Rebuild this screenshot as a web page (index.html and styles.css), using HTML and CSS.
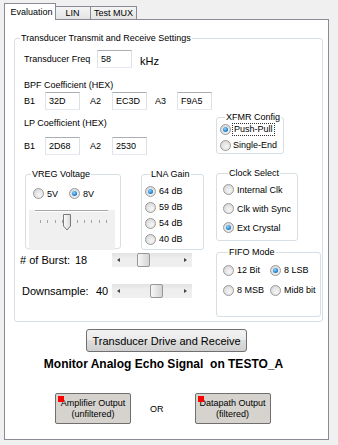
FILE: index.html
```html
<!DOCTYPE html>
<html lang="en">
<head>
    <meta charset="UTF-8">
    <title>Evaluation</title>
    <link rel="stylesheet" href="styles.css">
</head>
<body>
    <div class="window">
        <div class="tabs">
            <div class="tab tab-active">Evaluation</div>
            <div class="tab tab-lin">LIN</div>
            <div class="tab tab-mux">Test MUX</div>
        </div>

        <div class="panel">
            <fieldset class="group main-group">
                <legend>Transducer Transmit and Receive Settings</legend>
                <div class="main-cols">
                    <div class="left-col">
                        <div class="freq-row">
                            <span class="freq-label">Transducer Freq</span>
                            <span class="textbox">58</span>
                            <span class="unit">kHz</span>
                        </div>

                        <div class="coef-title bpf-title">BPF Coefficient (HEX)</div>
                        <div class="coef-row">
                            <span class="coef-label">B1</span>
                            <span class="textbox">32D</span>
                            <span class="coef-label coef-next">A2</span>
                            <span class="textbox">EC3D</span>
                            <span class="coef-label coef-last">A3</span>
                            <span class="textbox">F9A5</span>
                        </div>

                        <div class="coef-title lp-title">LP Coefficient (HEX)</div>
                        <div class="coef-row lp-row">
                            <span class="coef-label">B1</span>
                            <span class="textbox">2D68</span>
                            <span class="coef-label coef-next">A2</span>
                            <span class="textbox">2530</span>
                        </div>

                        <div class="groups-row">
                            <fieldset class="group vreg-group">
                                <legend>VREG Voltage</legend>
                                <div class="vreg-radios">
                                    <label class="radio"><span class="dot"></span>5V</label>
                                    <label class="radio vreg-8v"><span class="dot checked"></span>8V</label>
                                </div>
                                <div class="trackbar">
                                    <div class="groove"></div>
                                    <svg class="thumb" width="10" height="17" viewBox="0 0 10 17">
                                        <defs>
                                            <linearGradient id="thumbFill" x1="0" y1="0" x2="1" y2="0">
                                                <stop offset="0" stop-color="#fdfdfd"/>
                                                <stop offset="1" stop-color="#d9d9d9"/>
                                            </linearGradient>
                                        </defs>
                                        <path d="M1.5 0.5 H8.5 V12 L5 16 L1.5 12 Z" fill="url(#thumbFill)" stroke="#7a7a7a"/>
                                    </svg>
                                    <div class="ticks">
                                        <span></span><span></span><span></span><span></span><span></span>
                                        <span></span><span></span><span></span><span></span><span></span>
                                    </div>
                                </div>
                            </fieldset>

                            <fieldset class="group lna-group">
                                <legend>LNA Gain</legend>
                                <label class="radio"><span class="dot checked"></span>64 dB</label>
                                <label class="radio"><span class="dot"></span>59 dB</label>
                                <label class="radio"><span class="dot"></span>54 dB</label>
                                <label class="radio"><span class="dot"></span>40 dB</label>
                            </fieldset>
                        </div>

                        <div class="slider-row burst-row">
                            <span class="burst-label">#&nbsp;of&nbsp;Burst:</span>
                            <span class="burst-value">18</span>
                            <div class="hscroll">
                                <span class="arrow arrow-left"></span>
                                <span class="hthumb burst-thumb"></span>
                                <span class="arrow arrow-right"></span>
                            </div>
                        </div>

                        <div class="slider-row down-row">
                            <span class="down-label">Downsample:</span>
                            <span class="down-value">40</span>
                            <div class="hscroll">
                                <span class="arrow arrow-left"></span>
                                <span class="hthumb down-thumb"></span>
                                <span class="arrow arrow-right"></span>
                            </div>
                        </div>
                    </div>

                    <div class="right-col">
                        <fieldset class="group xfmr-group">
                            <legend>XFMR Config</legend>
                            <label class="radio"><span class="dot checked"></span><span class="focus">Push-Pull</span></label>
                            <label class="radio"><span class="dot"></span>Single-End</label>
                        </fieldset>

                        <fieldset class="group clock-group">
                            <legend>Clock Select</legend>
                            <label class="radio"><span class="dot"></span>Internal Clk</label>
                            <label class="radio"><span class="dot"></span>Clk with Sync</label>
                            <label class="radio"><span class="dot checked"></span>Ext Crystal</label>
                        </fieldset>

                        <fieldset class="group fifo-group">
                            <legend>FIFO Mode</legend>
                            <div class="fifo-grid">
                                <label class="radio"><span class="dot"></span>12 Bit</label>
                                <label class="radio"><span class="dot checked"></span>8 LSB</label>
                                <label class="radio"><span class="dot"></span>8 MSB</label>
                                <label class="radio"><span class="dot"></span>Mid8 bit</label>
                            </div>
                        </fieldset>
                    </div>
                </div>
            </fieldset>

            <button class="drive-button">Transducer Drive and Receive</button>
            <div class="monitor-title">Monitor Analog Echo Signal&nbsp; on TESTO_A</div>

            <div class="output-row">
                <button class="output-button"><span class="led"></span>Amplifier Output<br>(unfiltered)</button>
                <span class="or-label">OR</span>
                <button class="output-button"><span class="led"></span>Datapath Output<br>(filtered)</button>
            </div>
        </div>
    </div>
</body>
</html>
```

FILE: styles.css
```css
:root {
    --panel-border: #898c95;
    --group-border: #d5dfe5;
}

body {
    margin: 0;
    background: #f0f0f0;
    font-family: "Liberation Sans", Arial, sans-serif;
    font-size: 9px;
    color: #000;
}

.window {
    padding: 3px 0 0 4px;
}

/* tab strip */
.tabs {
    display: flex;
    align-items: flex-end;
    height: 16px;
}

.tab {
    box-sizing: border-box;
    height: 13px;
    line-height: 12px;
    border: 1px solid var(--panel-border);
    border-bottom: none;
    background: linear-gradient(#f4f4f4, #e4e4e4);
    text-align: center;
}

.tab-active {
    position: relative;
    z-index: 1;
    width: 52px;
    height: 17px;
    line-height: 17px;
    margin-bottom: -1px;
    background: #fff;
    padding-left: 3px;
}

.tab-lin {
    width: 36px;
    margin-left: -1px;
    border-left: none;
}

.tab-mux {
    width: 47px;
    margin-left: -1px;
}

.panel {
    box-sizing: border-box;
    width: 325px;
    height: 421px;
    border: 1px solid var(--panel-border);
    background: #fff;
}

/* group boxes */
.group {
    box-sizing: border-box;
    margin: 0;
    padding: 0;
    border: 1px solid var(--group-border);
    border-radius: 3px;
    min-width: 0;
}

.group legend {
    margin-left: 5px;
    padding: 0 1px;
    line-height: 12px;
}

.main-group {
    width: 309px;
    height: 290px;
    margin: 12px 0 0 9px;
}

.main-cols {
    display: flex;
}

.left-col {
    width: 201px;
}

.right-col {
    display: flex;
    flex-direction: column;
}

.textbox {
    box-sizing: border-box;
    display: inline-block;
    width: 35px;
    height: 18px;
    line-height: 16px;
    padding-left: 3px;
    border: 1px solid;
    border-color: #abadb3 #dbdfe6 #e3e9ef #e2e3ea;
    background: #fff;
}

.freq-row {
    display: flex;
    align-items: center;
    height: 18px;
    margin-top: 6px;
    padding-left: 9px;
}

.freq-label {
    width: 73px;
}

.unit {
    margin: 3px 0 0 8px;
    font-size: 11px;
}

.coef-title {
    line-height: 12px;
    padding-left: 9px;
}

.bpf-title {
    margin-top: 11px;
}

.lp-title {
    margin-top: 7px;
}

.coef-row {
    display: flex;
    align-items: center;
    height: 18px;
    margin-top: 1px;
    padding-left: 9px;
}

.lp-row {
    margin-top: 8px;
}

.coef-label {
    width: 21px;
}

.coef-next {
    width: 22px;
    margin-left: 10px;
}

.coef-last {
    width: 22px;
    margin-left: 8px;
}

/* radio buttons */
.radio {
    display: flex;
    align-items: center;
    gap: 3px;
    white-space: nowrap;
}

.dot {
    box-sizing: border-box;
    position: relative;
    flex: none;
    width: 11px;
    height: 11px;
    border: 1px solid #9a9a9a;
    border-radius: 50%;
    background: radial-gradient(circle at 60% 65%, #f6f6f6 0, #e2e2e2 55%, #cfcfcf 100%);
}

.dot.checked::after {
    content: "";
    position: absolute;
    left: 2px;
    top: 2px;
    width: 5px;
    height: 5px;
    border-radius: 50%;
    background: radial-gradient(circle at 40% 35%, #8fd8ff 0, #2a8ad4 55%, #124c84 100%);
}

.focus {
    padding: 0 1px;
    outline: 1px dotted #333;
    outline-offset: 0;
    line-height: 11px;
}

.groups-row {
    display: flex;
    align-items: flex-start;
    margin-top: 13px;
}

.vreg-group {
    width: 96px;
    height: 81px;
    margin-left: 10px;
}

.vreg-radios {
    display: flex;
    height: 13px;
    margin: 7px 0 0 7px;
}

.vreg-8v {
    margin-left: 11px;
}

.trackbar {
    position: relative;
    width: 86px;
    height: 40px;
    margin: 3px 0 0 3px;
    background: #f0f0f0;
}

.groove {
    height: 1px;
    margin: 10px 7px 0 6px;
    border-top: 1px solid #a7a7a7;
    background: #fff;
}

.thumb {
    position: absolute;
    left: 33px;
    top: 4px;
}

.ticks {
    display: flex;
    justify-content: space-between;
    margin: 8px 8px 0 11px;
}

.ticks span {
    width: 1px;
    height: 3px;
    background: #a3a3a3;
}

.lna-group {
    width: 63px;
    height: 82px;
    margin-left: 20px;
    padding: 3px 0 0 3px;
}

.lna-group .radio {
    height: 16px;
}

/* bottom sliders */
.slider-row {
    display: flex;
    align-items: center;
    height: 14px;
    font-size: 11px;
}

.burst-row {
    margin-top: 3px;
    padding-left: 5px;
}

.burst-label {
    width: 55px;
}

.burst-value {
    width: 37px;
}

.down-row {
    margin-top: 17px;
    padding-left: 7px;
}

.down-label {
    width: 74px;
}

.down-value {
    width: 16px;
}

.hscroll {
    position: relative;
    display: flex;
    align-items: center;
    justify-content: space-between;
    box-sizing: border-box;
    width: 80px;
    height: 14px;
    padding: 0 5px;
    background: linear-gradient(#e3e3e3, #eeeeee 40%, #efefef);
}

.arrow {
    width: 0;
    height: 0;
    border-top: 2px solid transparent;
    border-bottom: 2px solid transparent;
}

.arrow-left {
    border-right: 3px solid #444;
}

.arrow-right {
    border-left: 3px solid #444;
}

.hthumb {
    position: absolute;
    top: 0;
    box-sizing: border-box;
    width: 13px;
    height: 14px;
    border: 1px solid #979797;
    border-radius: 2px;
    background: linear-gradient(90deg, #f7f7f7, #e3e3e3 55%, #d4d4d4);
}

.burst-thumb {
    left: 25px;
}

.down-thumb {
    left: 38px;
}

/* right column groups */
.xfmr-group {
    width: 68px;
    height: 43px;
    margin-top: 67px;
    padding-left: 3px;
}

.xfmr-group .radio {
    height: 16px;
    gap: 2px;
}

.xfmr-group .radio:first-of-type {
    margin-top: -2px;
}

.clock-group {
    width: 82px;
    height: 74px;
    margin-top: 13px;
    padding: 1px 0 0 6px;
}

.clock-group .radio {
    height: 19px;
}

.fifo-group {
    width: 105px;
    height: 71px;
    margin-top: 5px;
    padding: 2px 0 0 6px;
}

.fifo-grid {
    display: grid;
    grid-template-columns: 47px auto;
    grid-auto-rows: 20px;
}

/* buttons under the group */
.drive-button {
    display: block;
    width: 161px;
    height: 23px;
    margin: 7px auto 0;
    padding: 0;
    border: 1px solid #707070;
    border-radius: 3px;
    background: linear-gradient(#f2f2f2, #ebebeb 45%, #dddddd 50%, #cfcfcf);
    font-family: inherit;
    font-size: 11px;
    color: #000;
}

.monitor-title {
    margin-top: 5px;
    line-height: 14px;
    text-align: center;
    font-size: 12px;
    font-weight: bold;
    padding-right: 6px;
}

.output-row {
    display: flex;
    align-items: center;
    margin-top: 22px;
    padding-left: 50px;
}

.output-button {
    position: relative;
    width: 76px;
    height: 31px;
    padding: 0;
    border: 1px solid #6f6f6f;
    border-radius: 2px;
    background: #d6d3ce;
    font-family: inherit;
    font-size: 9px;
    line-height: 11px;
    color: #000;
}

.led {
    position: absolute;
    left: 2px;
    top: 2px;
    width: 6px;
    height: 6px;
    background: #ff0000;
}

.or-label {
    margin: 0 31px 0 19px;
}
```
